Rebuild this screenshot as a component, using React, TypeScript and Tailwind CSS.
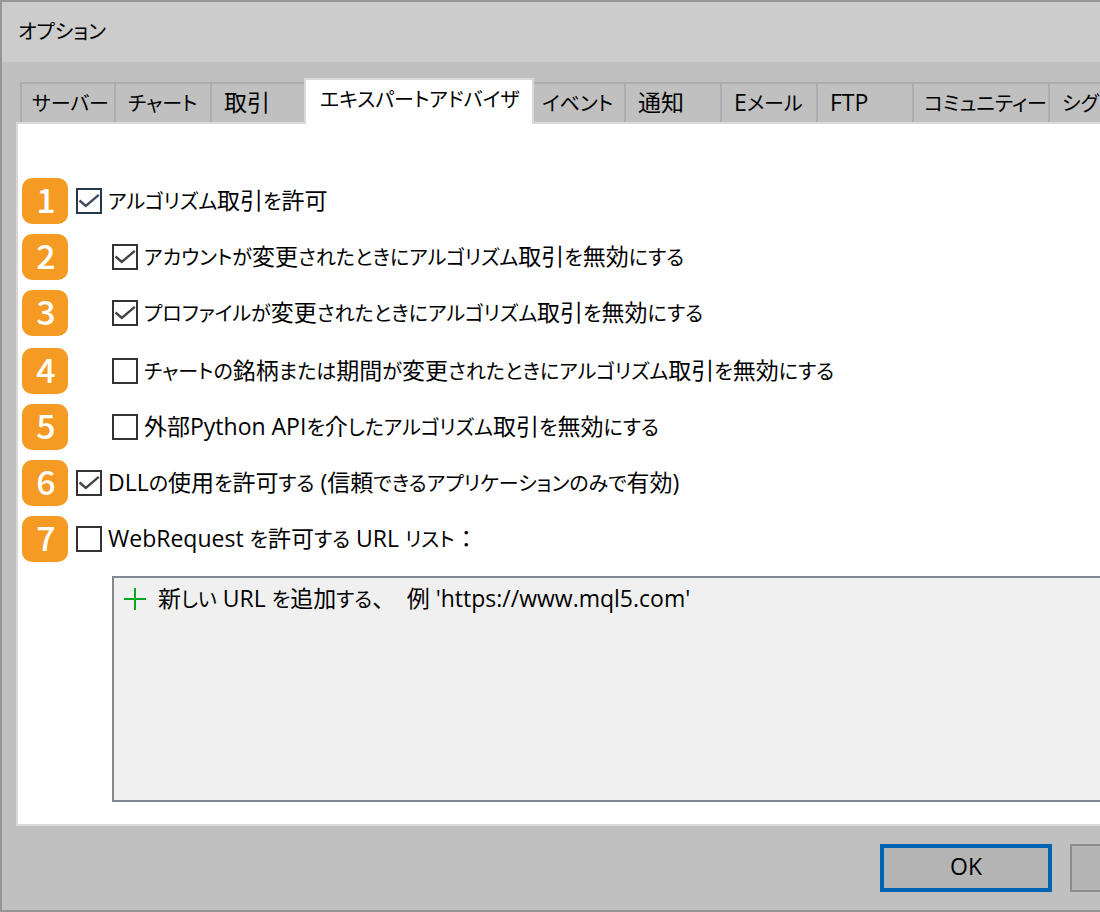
import { useState } from "react";

type Option = { label: string; checked: boolean; nested?: boolean; focused?: boolean };

const tabs = [
  { label: "サーバー", width: "w-[94px]", inset: "pl-2.5" },
  { label: "チャート", width: "w-[96px]", inset: "pl-3" },
  { label: "取引", width: "w-[94px]", inset: "pl-3" },
  { label: "エキスパートアドバイザ", width: "w-[230px]", inset: "pl-3.5" },
  { label: "イベント", width: "w-[90px]", inset: "pl-2" },
  { label: "通知", width: "w-[96px]", inset: "pl-3" },
  { label: "Eメール", width: "w-[96px]", inset: "pl-3" },
  { label: "FTP", width: "w-[96px]", inset: "pl-3" },
  { label: "コミュニティー", width: "w-[136px]", inset: "pl-2.5" },
  { label: "シグ", width: "w-[110px]", inset: "pl-3" },
];

const activeTab = 3;

const groups: Option[][] = [
  [
    { label: "アルゴリズム取引を許可", checked: true, focused: true },
    { label: "アカウントが変更されたときにアルゴリズム取引を無効にする", checked: true, nested: true },
    { label: "プロファイルが変更されたときにアルゴリズム取引を無効にする", checked: true, nested: true },
  ],
  [
    { label: "チャートの銘柄または期間が変更されたときにアルゴリズム取引を無効にする", checked: false, nested: true },
    { label: "外部Python APIを介したアルゴリズム取引を無効にする", checked: false, nested: true },
    { label: "DLLの使用を許可する (信頼できるアプリケーションのみで有効)", checked: true },
    { label: "WebRequest を許可する URL リスト：", checked: false },
  ],
];

/* Kana are set smaller with proportional metrics; kanji, Latin and punctuation are full size. */
function Text({ children }: { children: string }) {
  return (
    <span className="text-[20px] leading-8 whitespace-pre [font-feature-settings:'palt']">
      {children.split(/([ -~\u3000\u3001\uff1a\u4e00-\u9fff]+)/).map((run, i) =>
        i % 2 === 1 ? (
          <span key={i} className="text-[23px] [font-feature-settings:normal]">
            {run}
          </span>
        ) : (
          run
        ),
      )}
    </span>
  );
}

function OptionRow({ option, number }: { option: Option; number: number }) {
  const [checked, setChecked] = useState(option.checked);
  return (
    <div className="flex h-[46px] items-center">
      <span className="flex size-[46px] shrink-0 items-center justify-center rounded-[10px] bg-[#f59a23] pb-1 pl-0.5 font-['Noto_Sans_CJK_JP',sans-serif] text-[34px] leading-none font-medium text-white">
        {number}
      </span>
      <label className={`flex items-center gap-1.5 ${option.nested ? "pl-11" : "pl-2"}`}>
        <span className="grid size-[26px] shrink-0">
          <input
            type="checkbox"
            checked={checked}
            onChange={(e) => setChecked(e.target.checked)}
            className={`col-start-1 row-start-1 size-[26px] appearance-none border-2 bg-white ${option.focused ? "border-[#26394a]" : "border-[#333333]"}`}
          />
          {checked && (
            <svg viewBox="0 0 26 26" className="pointer-events-none col-start-1 row-start-1 size-[26px]" aria-hidden="true">
              <path d="M3.5 12.5 L9.8 18 L22.8 6.8" fill="none" stroke={option.focused ? "#3f4d5c" : "#444444"} strokeWidth="2.4" />
            </svg>
          )}
        </span>
        <Text>{option.label}</Text>
      </label>
    </div>
  );
}

export default function App() {
  return (
    <div className="flex min-h-screen flex-col overflow-hidden border-y-2 border-l-2 border-[#969696] bg-[#c0c0c0] font-['Open_Sans','Noto_Sans_CJK_JP',sans-serif] text-[23px] leading-8 text-black">
      <header className="flex h-[60px] items-center bg-[#cccccc] pb-0.5 pl-4">
        <h1>
          <Text>オプション</Text>
        </h1>
      </header>

      <main className="flex flex-1 flex-col pt-4 pl-3.5">
        <div role="tablist" className="z-10 -mb-0.5 flex h-[46px] items-end pl-1">
          {tabs.map((tab, i) => (
            <button
              key={tab.label}
              type="button"
              role="tab"
              aria-selected={i === activeTab}
              className={`shrink-0 text-left ${tab.width} ${tab.inset} ${
                i === activeTab
                  ? "h-[46px] border-2 border-b-0 border-[#d9d9d9] bg-white pb-1.5"
                  : `mb-0.5 h-10 border-t-2 border-[#adadad] ${i === activeTab + 1 ? "" : "border-l-2"}`
              }`}
            >
              <Text>{tab.label}</Text>
            </button>
          ))}
        </div>

        <section className="flex flex-1 flex-col border-y-2 border-l-2 border-[#d9d9d9] bg-white pt-[54px] pb-[22px] pl-1">
          <div className="flex flex-col gap-3">
            {groups.map((group, g) => (
              <div key={g} className="flex flex-col gap-2.5">
                {group.map((option, i) => (
                  <OptionRow key={option.label} option={option} number={g * groups[0].length + i + 1} />
                ))}
              </div>
            ))}
          </div>
          <div className="mt-3.5 ml-[90px] min-h-[120px] flex-1 border-y-2 border-l-2 border-[#828790] bg-[#f0f0f0] pt-1 pl-2.5">
            <button type="button" className="flex items-center gap-3">
              <svg viewBox="0 0 22 22" className="size-[22px]" aria-hidden="true">
                <path d="M0 11 H22 M11 0 V22" stroke="#06a81e" strokeWidth="2" />
              </svg>
              <Text>{"新しい URL を追加する、　例 'https://www.mql5.com'"}</Text>
            </button>
          </div>
        </section>
      </main>

      <footer className="-mr-[142px] flex justify-end gap-[18px] pt-[18px] pb-[18px]">
        <button type="button" className="h-12 w-[172px] border-4 border-[#0063b1] bg-[#b4b4b4] pb-0.5">
          <Text>OK</Text>
        </button>
        <button type="button" aria-label="キャンセル" className="h-12 w-[172px] border-2 border-[#8c8c8c] bg-[#b4b4b4]" />
      </footer>
    </div>
  );
}
